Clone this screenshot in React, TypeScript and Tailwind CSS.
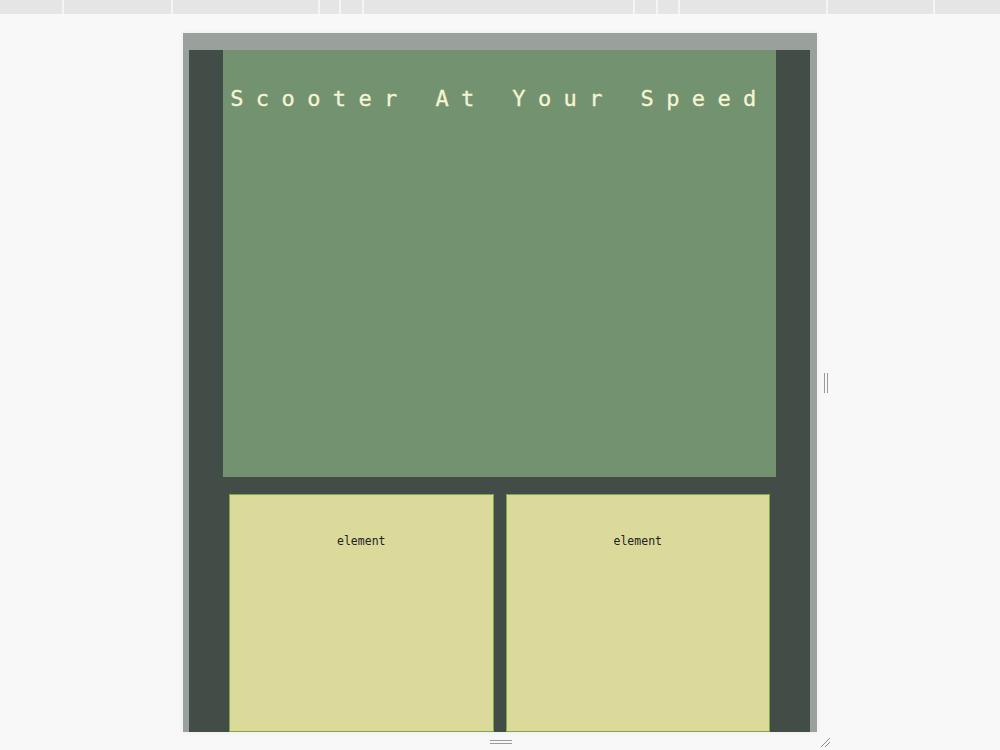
const tabs = [64, 109, 147, 21, 23, 271, 23, 22, 148, 107, 65]

export default function App() {
  return (
    <div className="flex h-[750px] w-[1000px] flex-col overflow-hidden bg-[#f8f8f8]">
      {/* Top strip */}
      <div className="flex h-[14px] shrink-0 bg-[#e5e5e5]">
        {tabs.map((w, i) => (
          <div
            key={i}
            style={{ width: w }}
            className="h-full shrink-0 border-r-2 border-[#f4f4f4] last:border-r-0"
          />
        ))}
      </div>

      {/* Canvas */}
      <div className="flex flex-1 justify-center pt-[19px]">
        <div className="relative flex h-[699px] w-[634px] flex-col bg-[#9aa19c] pt-[17px] pr-[7px] pl-[6px] shadow-[0_0_6px_rgba(0,0,0,0.06)]">
          <div className="flex flex-1 flex-col overflow-hidden bg-[#424d47] px-[34px]">
            <div className="h-[427px] shrink-0 bg-[#729270] pt-[34px] text-center">
              <h1 className="font-['DejaVu_Sans_Mono',monospace] text-[22px] leading-[30px] tracking-[12.4px] text-[#f6f4d2] [-webkit-text-stroke:0.3px_#f6f4d2]">
                Scooter At Your Speed
              </h1>
            </div>
            <div className="mt-[17px] flex flex-1 gap-[12px] px-[6px]">
              {['element', 'element'].map((t, i) => (
                <div
                  key={i}
                  className="flex-1 border border-[#7fa84a] bg-[#dbda9b] pt-[32px] text-center"
                >
                  <span className="font-['DejaVu_Sans_Mono',monospace] text-[11.5px] leading-[16px] text-[#222]">
                    {t}
                  </span>
                </div>
              ))}
            </div>
          </div>

          {/* resize handles */}
          <div className="absolute top-[340px] -right-[11px] flex h-[20px] gap-[2px]">
            <div className="w-px bg-[#9a9a9a]" />
            <div className="w-px bg-[#9a9a9a]" />
          </div>
          <div className="absolute -bottom-[12px] left-[307px] flex w-[22px] flex-col gap-[2px]">
            <div className="h-px bg-[#9a9a9a]" />
            <div className="h-px bg-[#9a9a9a]" />
          </div>
          <svg
            className="absolute -right-[14px] -bottom-[16px]"
            width="12"
            height="12"
            viewBox="0 0 12 12"
          >
            <path d="M2 11 L11 2 M6 11 L11 6" stroke="#8a8a8a" strokeWidth="1" />
          </svg>
        </div>
      </div>
    </div>
  )
}
